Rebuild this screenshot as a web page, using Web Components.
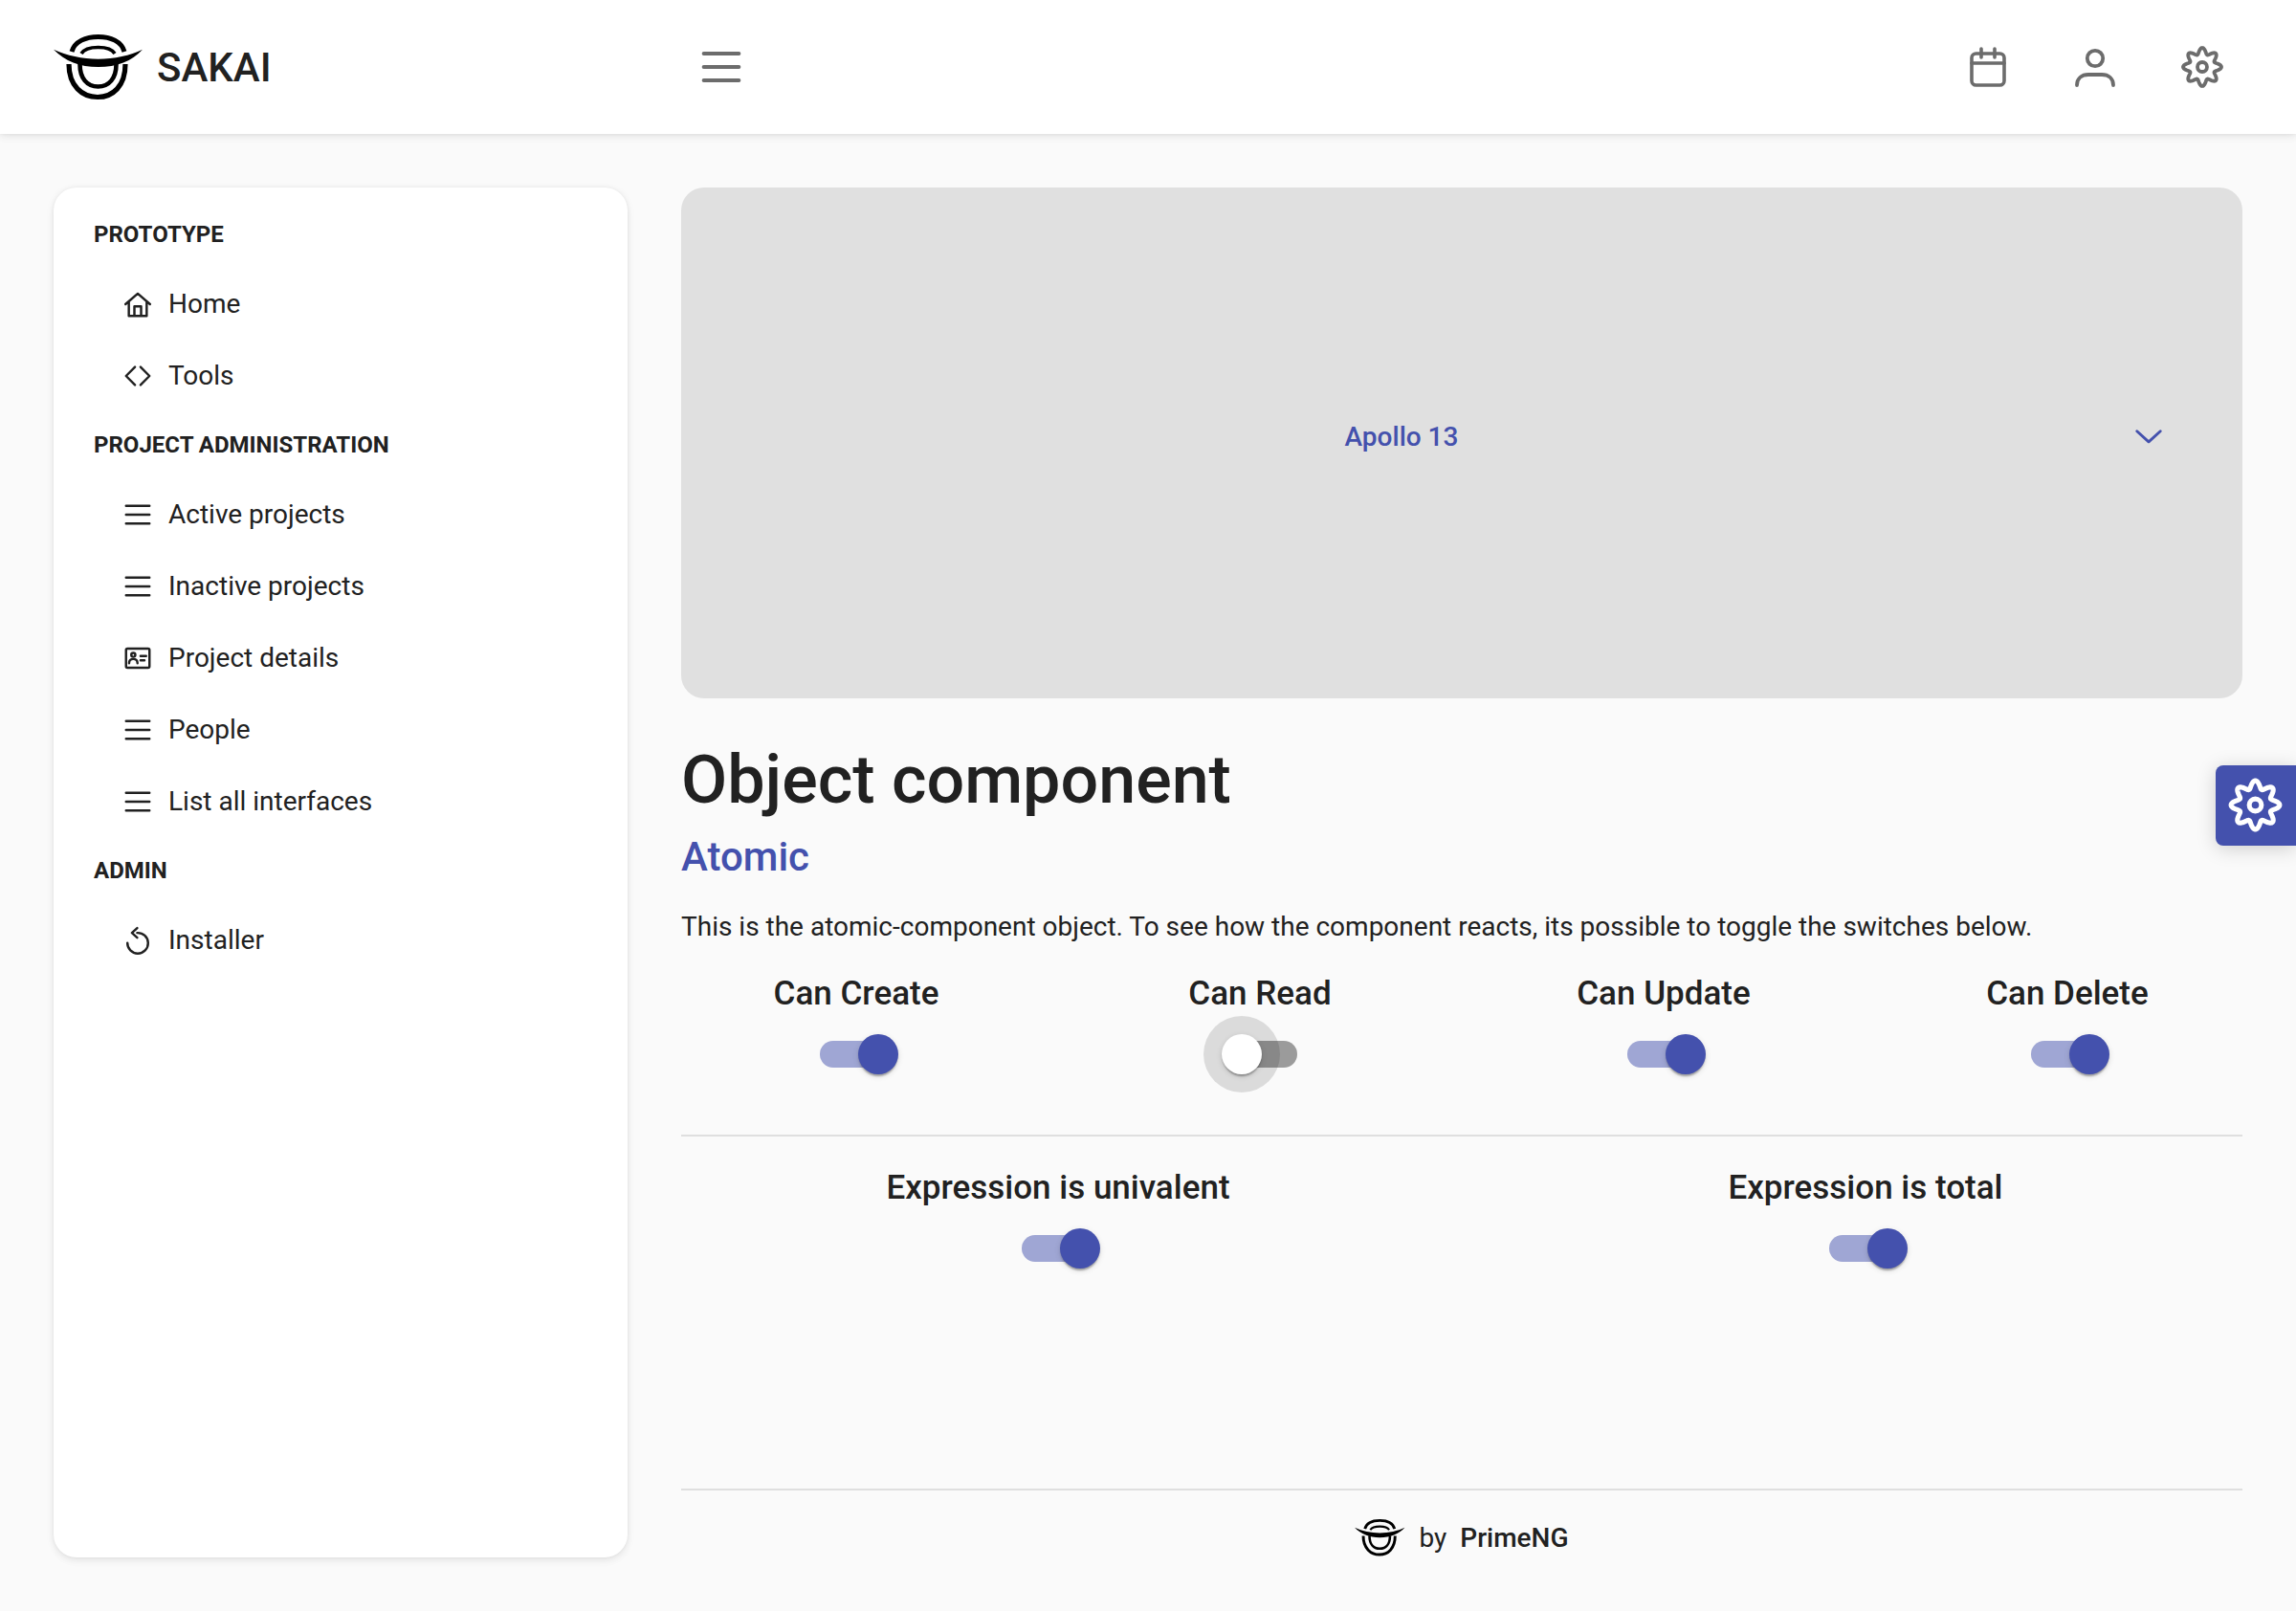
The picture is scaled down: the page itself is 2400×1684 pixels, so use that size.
<!DOCTYPE html>
<html>
<head>
<meta charset="utf-8">
<title>Object component</title>
<style>
  html, body { margin: 0; padding: 0; height: 100%; }
  body { background: #fafafa; color: #212121; font-family: Roboto, "Noto Sans", sans-serif; font-size: 28px; overflow: hidden; }
</style>
</head>
<body>
<app-shell>
  <app-topbar slot="top"></app-topbar>
  <app-sidebar slot="side">
    <menu-group label="PROTOTYPE">
      <menu-item icon="home">Home</menu-item>
      <menu-item icon="code">Tools</menu-item>
    </menu-group>
    <menu-group label="PROJECT ADMINISTRATION">
      <menu-item icon="bars">Active projects</menu-item>
      <menu-item icon="bars">Inactive projects</menu-item>
      <menu-item icon="card">Project details</menu-item>
      <menu-item icon="bars">People</menu-item>
      <menu-item icon="bars">List all interfaces</menu-item>
    </menu-group>
    <menu-group label="ADMIN">
      <menu-item icon="replay">Installer</menu-item>
    </menu-group>
  </app-sidebar>
  <object-page></object-page>
  <config-button slot="over"></config-button>
</app-shell>

<script>
// wavy gear outline, same shape for topbar and config button
function gearPath() {
  let d = '';
  for (let i = 0; i <= 160; i++) {
    const t = i / 160 * Math.PI * 2;
    const r = 16.8 + 3.2 * Math.cos(8 * t);
    const x = 24 + r * Math.cos(t + Math.PI / 2);
    const y = 24 + r * Math.sin(t + Math.PI / 2);
    d += (i ? 'L' : 'M') + x.toFixed(2) + ' ' + y.toFixed(2);
  }
  return d + 'Z';
}

const ICONS = {
  home: '<path d="M2 24 24 5l22 19M8 20v25h32V20M18 45V28h12v17"/>',
  code: '<path d="M19 8 3 24l16 16M29 8l16 16-16 16"/>',
  bars: '<path d="M3 8h42M3 24h42M3 40h42"/>',
  card: '<rect x="3" y="7" width="42" height="34" rx="2.500"/><circle cx="16" cy="18" r="3.600"/><path d="M8.500 33c0-5 3-7.500 7.500-7.500s7.500 2.500 7.500 7.500M29 20h10M29 28h7"/>',
  replay: '<path d="M23 10.500A18.500 18.500 0 1 1 5.500 28.500"/><path d="M23 2l-9.500 8.500L23 19"/>',
  calendar: '<rect x="7" y="10" width="34" height="33" rx="4.500"/><path d="M7 20h34M17 5v9M31 5v9"/>',
  user: '<circle cx="24" cy="15" r="8.200"/><path d="M5 43C5 36 10 32 17 32h14c7 0 12 4 12 11"/>',
  gear: '<path d="' + gearPath() + '"/><circle cx="24" cy="24" r="5"/>',
  chevron: '<path d="M3 15l21 19 21-19"/>'
};

class AppIcon extends HTMLElement {
  static get observedAttributes() { return ['name']; }
  constructor() {
    super();
    this.attachShadow({ mode: 'open' });
  }
  connectedCallback() { this.render(); }
  attributeChangedCallback() { this.render(); }
  render() {
    const w = this.getAttribute('stroke') || '4.2';
    this.shadowRoot.innerHTML = `
      <style>
        :host { display: inline-flex; width: var(--icon-size, 28px); height: var(--icon-size, 28px); color: inherit; flex: none; }
        svg { width: 100%; height: 100%; display: block; overflow: visible; fill: none; stroke: currentColor; stroke-width: ${w}; stroke-linecap: round; stroke-linejoin: round; }
      </style>
      <svg viewBox="0 0 48 48">${ICONS[this.getAttribute('name')] || ''}</svg>
    `;
  }
}
customElements.define('app-icon', AppIcon);

class SakaiLogo extends HTMLElement {
  connectedCallback() {
    this.attachShadow({ mode: 'open' }).innerHTML = `
      <style>
        :host { display: block; width: var(--logo-w, 94px); height: var(--logo-h, 69px); flex: none; }
        svg { width: 100%; height: 100%; display: block; }
        path { fill: none; stroke: #000; }
      </style>
      <svg viewBox="0 0 94 69" preserveAspectRatio="none">
        <path stroke-width="5" d="M19 18C22 7 34 2.500 46.700 2.500S71 7 74 18"/>
        <path stroke-width="3.600" d="M29 20C32 15 39 13.500 46.700 13.500S61 15 64 20"/>
        <path style="fill:#000;stroke:none" d="M0 15.700C14 22 30 25.700 46.700 25.700S80 22 93 15.700C82 28 66 34 46.700 34S12 28 0 15.700Z"/>
        <path stroke-width="5.200" d="M16 31C16 54 30 65.500 46 65.500S75 54 75 31"/>
        <path stroke-width="4.600" d="M27.500 31C27.500 46 35 54.500 46.500 54.500S65.500 46 65.500 31"/>
      </svg>
    `;
  }
}
customElements.define('sakai-logo', SakaiLogo);

class AppShell extends HTMLElement {
  constructor() {
    super();
    this.attachShadow({ mode: 'open' }).innerHTML = `
      <style>
        :host { display: flex; flex-direction: column; height: 1684px; position: relative; }
        main { flex: 1; min-height: 0; display: flex; gap: 56px; padding: 56px 56px 28px; }
        ::slotted([slot="side"]) { width: 600px; flex: none; margin-bottom: 28px; }
      </style>
      <slot name="top"></slot>
      <main>
        <slot name="side"></slot>
        <slot></slot>
      </main>
      <slot name="over"></slot>
    `;
  }
}
customElements.define('app-shell', AppShell);

class AppTopbar extends HTMLElement {
  constructor() {
    super();
    this.attachShadow({ mode: 'open' }).innerHTML = `
      <style>
        :host { display: flex; align-items: center; height: 140px; flex: none; background: #fff; padding-left: 56px; box-sizing: border-box;
          box-shadow: 0 6px 10px rgba(0,0,0,.02), 0 0 4px rgba(0,0,0,.05), 0 2px 8px rgba(0,0,0,.08); position: relative; z-index: 2; }
        .brand { display: flex; align-items: center; width: 677px; gap: 14px; flex: none; }
        .name { font-size: 42px; font-weight: 500; color: #212121; }
        .bars { --icon-size: 42px; color: #6c6c6c; }
        .right { margin-left: auto; display: flex; align-items: center; gap: 64px; padding-right: 74px; color: #6c6c6c; --icon-size: 48px; }
      </style>
      <div class="brand"><sakai-logo></sakai-logo><span class="name">SAKAI</span></div>
      <app-icon class="bars" name="bars" stroke="4.500"></app-icon>
      <div class="right">
        <app-icon name="calendar" stroke="3.600"></app-icon>
        <app-icon name="user" stroke="3.800"></app-icon>
        <app-icon name="gear" stroke="3.800"></app-icon>
      </div>
    `;
  }
}
customElements.define('app-topbar', AppTopbar);

class AppSidebar extends HTMLElement {
  constructor() {
    super();
    this.attachShadow({ mode: 'open' }).innerHTML = `
      <style>
        :host { display: block; background: #fff; border-radius: 24px; padding: 14px 42px; box-sizing: border-box;
          box-shadow: 0 6px 10px rgba(0,0,0,.02), 0 0 4px rgba(0,0,0,.05), 0 2px 8px rgba(0,0,0,.08); }
      </style>
      <slot></slot>
    `;
  }
}
customElements.define('app-sidebar', AppSidebar);

class MenuGroup extends HTMLElement {
  constructor() {
    super();
    this.attachShadow({ mode: 'open' }).innerHTML = `
      <style>
        :host { display: block; }
        .label { font-size: 24px; font-weight: 700; color: #212121; line-height: 28px; padding: 21px 0 21px; }
      </style>
      <div class="label"></div>
      <slot></slot>
    `;
  }
  connectedCallback() {
    this.shadowRoot.querySelector('.label').textContent = this.getAttribute('label');
  }
}
customElements.define('menu-group', MenuGroup);

class MenuItem extends HTMLElement {
  constructor() {
    super();
    this.attachShadow({ mode: 'open' }).innerHTML = `
      <style>
        :host { display: flex; align-items: center; height: 75px; padding-left: 32px; gap: 18px; font-size: 28px; color: #212121; }
      </style>
      <app-icon></app-icon>
      <slot></slot>
    `;
  }
  connectedCallback() {
    this.shadowRoot.querySelector('app-icon').setAttribute('name', this.getAttribute('icon'));
  }
}
customElements.define('menu-item', MenuItem);

class AppDropdown extends HTMLElement {
  constructor() {
    super();
    this.attachShadow({ mode: 'open' }).innerHTML = `
      <style>
        :host { display: flex; align-items: center; height: 534px; box-sizing: border-box; padding-bottom: 14px; flex: none; background: #e0e0e0; border-radius: 24px; color: #4451ad; }
        .label { flex: 1; text-align: center; font-size: 28px; font-weight: 500; padding-right: 16px; }
        app-icon { --icon-size: 28px; margin-right: 84px; margin-left: -2px; }
      </style>
      <div class="label"><slot></slot></div>
      <app-icon name="chevron" stroke="5"></app-icon>
    `;
  }
}
customElements.define('app-dropdown', AppDropdown);

class PermToggle extends HTMLElement {
  constructor() {
    super();
    this.attachShadow({ mode: 'open' }).innerHTML = `
      <style>
        :host { display: flex; flex-direction: column; align-items: center; }
        .label { font-size: 35px; font-weight: 500; line-height: 42px; color: #212121; }
        .sw { position: relative; width: 77px; height: 42px; margin-top: 21px; }
        .track { position: absolute; left: 0; right: 0; top: 7px; height: 28px; border-radius: 14px; background: rgba(68,81,173,.5); }
        .thumb { position: absolute; top: 0; left: 40px; width: 42px; height: 42px; border-radius: 50%; background: #4451ad;
          box-shadow: 0 4px 2px -2px rgba(0,0,0,.2), 0 2px 2px 0 rgba(0,0,0,.14), 0 2px 6px 0 rgba(0,0,0,.12); }
        :host([off]) .track { background: rgba(0,0,0,.38); }
        :host([off]) .thumb { left: -2px; background: #fff; }
        :host([focused]) .sw::before { content: ""; position: absolute; left: -21px; top: -19px; width: 80px; height: 80px; border-radius: 50%; background: rgba(0,0,0,.12); }
      </style>
      <div class="label"><slot></slot></div>
      <div class="sw"><div class="track"></div><div class="thumb"></div></div>
    `;
  }
}
customElements.define('perm-toggle', PermToggle);

class AppFooter extends HTMLElement {
  constructor() {
    super();
    this.attachShadow({ mode: 'open' }).innerHTML = `
      <style>
        :host { display: flex; align-items: center; justify-content: center; border-top: 2px solid #dfdfdf; height: 98px; font-size: 28px; color: #212121; margin-top: auto; gap: 14px; --logo-w: 53px; --logo-h: 39px; }
        b { font-weight: 500; }
      </style>
      <sakai-logo></sakai-logo><span>by</span><b>PrimeNG</b>
    `;
  }
}
customElements.define('app-footer', AppFooter);

class ConfigButton extends HTMLElement {
  constructor() {
    super();
    this.attachShadow({ mode: 'open' }).innerHTML = `
      <style>
        :host { position: absolute; right: 0; top: 800px; width: 84px; height: 84px; box-sizing: border-box; padding: 0 2px 2px 0; background: #4451ad; color: #fff; border-radius: 8px 0 0 8px;
          display: flex; align-items: center; justify-content: center; box-shadow: 0 3px 20px rgba(0,0,0,.18); z-index: 3; --icon-size: 61px; }
      </style>
      <app-icon name="gear" stroke="4"></app-icon>
    `;
  }
}
customElements.define('config-button', ConfigButton);

class ObjectPage extends HTMLElement {
  constructor() {
    super();
    this.attachShadow({ mode: 'open' }).innerHTML = `
      <style>
        :host { display: flex; flex-direction: column; flex: 1; min-width: 0; }
        h1 { margin: 43px 0 0; font-size: 70px; font-weight: 500; line-height: 84px; color: #212121; }
        h3 { margin: 14px 0 0; font-size: 42px; font-weight: 500; line-height: 50px; color: #4451ad; }
        p { margin: 30px 0 0; font-size: 28px; line-height: 36px; }
        .grid { display: grid; margin: 0 -28px; }
        .four { grid-template-columns: repeat(4, 1fr); margin-top: 31px; }
        .two { grid-template-columns: repeat(2, 1fr); margin-top: 33px; }
        hr { border: 0; border-top: 2px solid #dfdfdf; margin: 63px 0 0; width: 100%; }
      </style>
      <app-dropdown>Apollo 13</app-dropdown>
      <h1>Object component</h1>
      <h3>Atomic</h3>
      <p>This is the atomic-component object. To see how the component reacts, its possible to toggle the switches below.</p>
      <div class="grid four">
        <perm-toggle>Can Create</perm-toggle>
        <perm-toggle off focused>Can Read</perm-toggle>
        <perm-toggle>Can Update</perm-toggle>
        <perm-toggle>Can Delete</perm-toggle>
      </div>
      <hr>
      <div class="grid two">
        <perm-toggle>Expression is univalent</perm-toggle>
        <perm-toggle>Expression is total</perm-toggle>
      </div>
      <app-footer></app-footer>
    `;
  }
}
customElements.define('object-page', ObjectPage);
</script>
</body>
</html>
